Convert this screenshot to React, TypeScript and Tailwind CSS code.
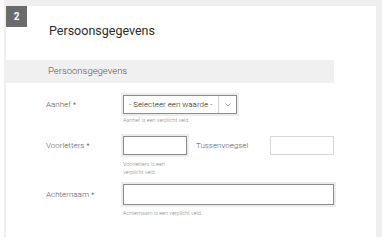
import React from "react";

const font = { fontFamily: "Roboto, 'Open Sans', sans-serif" };

export default function App() {
  return (
    <div className="w-[382px] h-[246px] bg-white overflow-hidden" style={font}>
      <div className="relative ml-[4px] h-[237px] border-l-[2px] border-t-[6px] border-r-[6px] border-[#efefef] bg-white">
        <div className="absolute left-0 top-0 w-[21px] h-[21px] bg-[#6b6b6b] text-white text-[10px] font-bold flex items-center justify-center leading-none">
          2
        </div>
        <div className="pt-[17px] pl-[43px] text-[12.5px] leading-[16px] text-[#2b2b2b]">
          Persoonsgegevens
        </div>
        <div className="mt-[21px] w-[328px] h-[23px] bg-[#f0f0f0] pl-[42px] flex items-center text-[9.5px] font-light text-[#555]">
          Persoonsgegevens
        </div>

        <div className="pl-[40px] w-[328px]">
          {/* Aanhef */}
          <div className="mt-[12px] flex">
            <div className="w-[77px] h-[19px] flex items-center text-[8px] font-light text-[#555]">Aanhef *</div>
            <div className="flex flex-col">
              <div className="w-[114px] h-[19px] flex border border-[#8c8c8c] shadow-[0_0_0_2px_#ececec] bg-white">
                <div className="flex-1 flex items-center pl-[5px] text-[8px] font-light text-[#222]">- Selecteer een waarde -</div>
                <div className="w-[18px] border-l border-[#cfcfcf] flex items-center justify-center">
                  <svg width="6" height="4" viewBox="0 0 6 4">
                    <polyline points="0.5,0.5 3,3 5.5,0.5" fill="none" stroke="#888" strokeWidth="0.8" />
                  </svg>
                </div>
              </div>
              <div className="mt-[2px] text-[5.5px] leading-[8px] font-light text-[#888]">Aanhef is een verplicht veld.</div>
            </div>
          </div>

          {/* Voorletters + Tussenvoegsel */}
          <div className="mt-[12px] flex">
            <div className="w-[77px] h-[19px] flex items-center text-[8px] font-light text-[#555]">Voorletters *</div>
            <div className="flex flex-col w-[64px]">
              <div className="w-[64px] h-[19px] border border-[#8c8c8c] shadow-[0_0_0_2px_#ececec] bg-white" />
              <div className="mt-[5px] text-[5.5px] leading-[8px] font-light text-[#888]">
                Voorletters is een
                <br />
                verplicht veld.
              </div>
            </div>
            <div className="ml-[9px] w-[74px] h-[19px] flex items-center text-[8px] font-light text-[#555]">Tussenvoegsel</div>
            <div className="w-[64px] h-[19px] border border-[#d8d8d8] bg-white" />
          </div>

          {/* Achternaam */}
          <div className="mt-[8px] flex">
            <div className="w-[77px] h-[21px] flex items-center text-[8px] font-light text-[#555]">Achternaam *</div>
            <div className="flex flex-col">
              <div className="w-[211px] h-[21px] border border-[#8c8c8c] shadow-[0_0_0_2px_#ececec] bg-white" />
              <div className="mt-[4px] text-[5.5px] leading-[8px] font-light text-[#888]">Achternaam is een verplicht veld.</div>
            </div>
          </div>
        </div>
      </div>
    </div>
  );
}
